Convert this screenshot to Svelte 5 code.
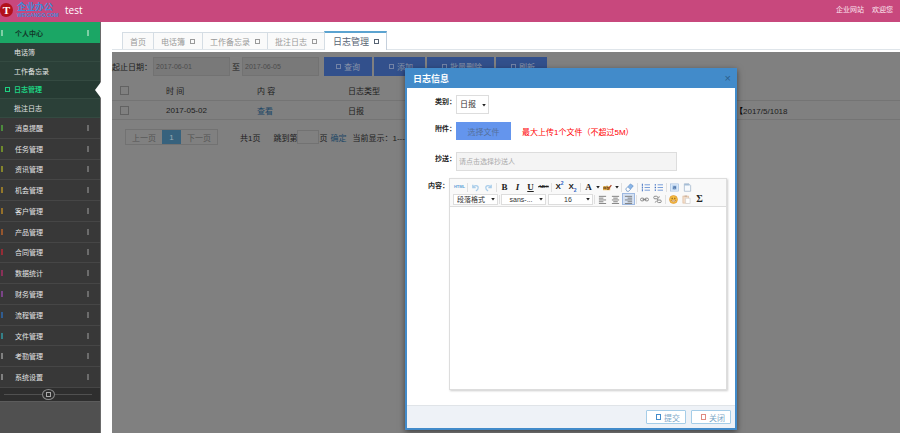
<script>
  const subMenu = ['电话簿', '工作备忘录', '日志管理', '批注日志'];

  const menu = [
    { label: '消息提醒', color: '#4c8a3c' },
    { label: '任务管理', color: '#6f8a2c' },
    { label: '资讯管理', color: '#85852c' },
    { label: '机会管理', color: '#94782a' },
    { label: '客户管理', color: '#96702a' },
    { label: '产品管理', color: '#96562e' },
    { label: '合同管理', color: '#962c36' },
    { label: '数据统计', color: '#8a3058' },
    { label: '财务管理', color: '#7a4488' },
    { label: '流程管理', color: '#305c90' },
    { label: '文件管理', color: '#348088' },
    { label: '考勤管理', color: '#808080' },
    { label: '系统设置', color: '#808080' }
  ];

  const tabs = ['首页', '电话簿', '工作备忘录', '批注日志', '日志管理'];

  let activeSub = $state('日志管理');
  let activeTab = $state('日志管理');
  let align = $state('right');
  let dateFrom = $state('2017-06-01');
  let dateTo = $state('2017-06-05');
</script>

{#snippet caret()}
  <svg class="caret" viewBox="0 0 6 6" aria-hidden="true"><path d="M1.2 2h3.6L3 4.4z" fill="#222" /></svg>
{/snippet}

{#snippet alignIcon(kind)}
  <svg viewBox="0 0 10 10" stroke="#777" stroke-width="1">
    {#if kind === 'left'}
      <path d="M1 1.5h8M1 3.5h5M1 5.5h8M1 7.5h5M1 9.5h8" />
    {:else if kind === 'center'}
      <path d="M1 1.5h8M2.5 3.5h5M1 5.5h8M2.5 7.5h5M1 9.5h8" />
    {:else}
      <path d="M1 1.5h8M4 3.5h5M1 5.5h8M4 7.5h5M1 9.5h8" />
    {/if}
  </svg>
{/snippet}

<div class="page">
  <header class="topbar">
    <div class="logo">
      <span class="logo-mark">T</span>
      <span class="logo-text">
        <strong>企业办公</strong>
        <small>WEIGANGO.COM</small>
      </span>
    </div>
    <span class="user">test</span>
    <nav class="top-links">
      <a href="#site">企业网站</a>
      <a href="#me">欢迎您</a>
    </nav>
  </header>

  <div class="body">
    <aside class="sidebar">
      <button class="group"><i class="bar"></i><span>个人中心</span><i class="bar"></i></button>
      <ul class="sub">
        {#each subMenu as item}
          <li class:active={activeSub === item}>
            <button onclick={() => (activeSub = item)}>
              <span class="mark">{#if activeSub === item}<i class="box"></i>{/if}</span>{item}
            </button>
          </li>
        {/each}
      </ul>
      <ul class="menu">
        {#each menu as item}
          <li>
            <button>
              <i class="bar" style="background: {item.color}"></i><span>{item.label}</span><i class="bar"></i>
            </button>
          </li>
        {/each}
      </ul>
      <div class="collapse">
        <button aria-label="收起"><i class="box"></i></button>
      </div>
    </aside>

    <main>
      <nav class="tabs">
        {#each tabs as tab, i}
          <button class:active={activeTab === tab} onclick={() => (activeTab = tab)}>
            {tab}{#if i > 0}<i class="box"></i>{/if}
          </button>
        {/each}
      </nav>

      <section class="panel">
        <div class="search">
          <label for="from">起止日期：</label>
          <input id="from" type="text" bind:value={dateFrom} />
          <label class="to" for="to">至</label>
          <input id="to" type="text" bind:value={dateTo} />
          <div class="actions">
            <button><i class="box"></i>查询</button>
            <button><i class="box"></i>添加</button>
            <button><i class="box"></i>批量删除</button>
            <button><i class="box"></i>刷新</button>
          </div>
        </div>

        <table>
          <colgroup>
            <col class="c-check" />
            <col class="c-time" />
            <col class="c-content" />
            <col />
            <col class="c-last" />
          </colgroup>
          <thead>
            <tr>
              <th><input type="checkbox" aria-label="全选" /></th>
              <th>时 间</th>
              <th>内 容</th>
              <th>日志类型</th>
              <th></th>
            </tr>
          </thead>
          <tbody>
            <tr>
              <td><input type="checkbox" aria-label="选择" /></td>
              <td>2017-05-02</td>
              <td><a href="#view">查看</a></td>
              <td>日报</td>
              <td><b>【</b>2017/5/1018</td>
            </tr>
          </tbody>
        </table>

        <div class="pager">
          <div class="pages">
            <button>上一页</button>
            <button class="current">1</button>
            <button>下一页</button>
          </div>
          <span class="total">共1页</span>
          <label for="goto">跳到第</label>
          <input id="goto" type="text" />
          <span>页</span>
          <a href="#go">确定</a>
          <span class="showing">当前显示：1---1条</span>
        </div>
      </section>
    </main>
  </div>

  <div class="modal" role="dialog" aria-labelledby="modal-title">
    <header>
      <h2 id="modal-title">日志信息</h2>
      <button aria-label="关闭窗口">×</button>
    </header>

    <form onsubmit={(e) => e.preventDefault()}>
      <div class="row">
        <label for="type">类别：</label>
        <div class="field">
          <span class="select type">
            <select id="type"><option>日报</option><option>周报</option></select>
            {@render caret()}
          </span>
        </div>
      </div>
      <div class="row tall">
        <label for="file">附件：</label>
        <div class="field">
          <button id="file" type="button" class="file">选择文件</button>
          <span class="tip">最大上传1个文件（不超过5M）</span>
        </div>
      </div>
      <div class="row">
        <label for="cc">抄送：</label>
        <div class="field">
          <input id="cc" class="cc" type="text" placeholder="请点击选择抄送人" />
        </div>
      </div>
      <div class="row">
        <label for="content">内容：</label>
        <div class="editor">
          <div class="toolbar">
            <div class="tools">
              <button type="button" class="html">HTML</button>
              <i class="sep"></i>
              <button type="button" aria-label="撤销">
                <svg viewBox="0 0 10 10" fill="none" stroke="#a9cdea" stroke-width="1.4"><path d="M2 2v3.2h3.2M2.2 5C3.5 2.2 8 2 8 5.3 8 7.2 6.8 8.3 5.4 8.8" /></svg>
              </button>
              <button type="button" aria-label="重做">
                <svg viewBox="0 0 10 10" fill="none" stroke="#a9cdea" stroke-width="1.4"><path d="M8 2v3.2H4.8M7.8 5C6.5 2.2 2 2 2 5.3 2 7.2 3.2 8.3 4.6 8.8" /></svg>
              </button>
              <i class="sep"></i>
              <button type="button" class="letter">B</button>
              <button type="button" class="letter italic">I</button>
              <button type="button" class="letter underline">U</button>
              <button type="button" class="strike">ABC</button>
              <i class="sep"></i>
              <button type="button" class="script">X<sup>2</sup></button>
              <button type="button" class="script">X<sub>2</sub></button>
              <i class="sep"></i>
              <button type="button" class="letter">A</button>
              {@render caret()}
              <button type="button" aria-label="背景色">
                <svg viewBox="0 0 10 10"><path d="M0 3.6h8v4.4H0z" fill="#f2b84b" /><path d="M1 7V4.5h2V7M1 5.8h2M4.5 3v4h2V5h-2" fill="none" stroke="#6b4a1c" stroke-width="0.9" /><path d="M6 6.5L9.3 2.4" stroke="#a84a30" stroke-width="1.4" /></svg>
              </button>
              {@render caret()}
              <i class="sep"></i>
              <button type="button" aria-label="清除格式">
                <svg viewBox="0 0 10 10"><path d="M1 6.6L6 1l3.2 2.2L4.4 9H2z" fill="#8ab6e8" stroke="#4e7fbd" stroke-width="0.6" /><path d="M1 6.6L2.9 4.5 6 6.9 4.4 9H2z" fill="#fff" stroke="#7c9cc4" stroke-width="0.6" /></svg>
              </button>
              <i class="sep"></i>
              <button type="button" aria-label="有序列表">
                <svg viewBox="0 0 10 10"><path d="M4 2h6M4 5h6M4 8h6" stroke="#6c95d6" /><path d="M1.5 0.8v2.4M1.5 3.9v2.3M1.5 6.9v2.4" stroke="#3f6fc0" stroke-width="1.1" /></svg>
              </button>
              <button type="button" aria-label="无序列表">
                <svg viewBox="0 0 10 10"><path d="M4 2h6M4 5h6M4 8h6" stroke="#6c95d6" /><path d="M0.8 1.3h1.4v1.4H0.8zM0.8 4.3h1.4v1.4H0.8zM0.8 7.3h1.4v1.4H0.8z" fill="#3f6fc0" /></svg>
              </button>
              <i class="sep"></i>
              <button type="button" aria-label="全选">
                <svg viewBox="0 0 10 10"><rect x="0.5" y="1" width="9" height="8" fill="#e3eefa" stroke="#9dbbdf" stroke-width="0.7" /><rect x="2" y="2.5" width="6" height="5" fill="#bcd6f2" /><path d="M3.6 3.8h2.6v2.6M6.2 5H3.7v1.5h2.5" fill="none" stroke="#3a6299" stroke-width="0.8" /></svg>
              </button>
              <button type="button" aria-label="清空文档">
                <svg viewBox="0 0 10 10"><path d="M1.5 0.8h5l2 2v6.4h-7z" fill="#f7fafd" stroke="#9fb3c8" stroke-width="0.8" /><path d="M1.5 1h4.8l1.5 1.8H1.5z" fill="#a5bdd6" /></svg>
              </button>
            </div>
            <div class="tools">
              <span class="select">
                <select aria-label="段落格式"><option>段落格式</option></select>
                {@render caret()}
              </span>
              <i class="sep"></i>
              <span class="select center">
                <select aria-label="字体"><option>sans-...</option></select>
                {@render caret()}
              </span>
              <i class="gap"></i>
              <span class="select center">
                <select aria-label="字号"><option>16</option></select>
                {@render caret()}
              </span>
              <i class="sep"></i>
              {#each ['left', 'center', 'right'] as kind}
                <button type="button" aria-label={kind} class:on={align === kind} onclick={() => (align = kind)}>
                  {@render alignIcon(kind)}
                </button>
              {/each}
              <i class="sep"></i>
              <button type="button" aria-label="超链接">
                <svg viewBox="0 0 10 10" fill="none" stroke="#858585" stroke-width="1.1"><rect x="0.6" y="3.5" width="4" height="3" rx="1.4" /><rect x="5.4" y="3.5" width="4" height="3" rx="1.4" /><path d="M3 5h4" /></svg>
              </button>
              <button type="button" aria-label="取消链接">
                <svg viewBox="0 0 10 10" fill="none" stroke="#8a8a8a" stroke-width="1.1"><rect x="0.8" y="1.4" width="4.4" height="2.8" rx="1.3" /><rect x="4.8" y="5.6" width="4.4" height="2.8" rx="1.3" /><path d="M7 1.5L6 3.8M2.5 8.4l1.4-2M4.4 4.2l1.4 1.6" /></svg>
              </button>
              <i class="sep"></i>
              <button type="button" aria-label="表情">
                <svg viewBox="0 0 10 10"><circle cx="5" cy="5" r="4.4" fill="#f9c243" stroke="#d88a24" stroke-width="0.7" /><path d="M3.5 3v1.6M6.5 3v1.6" stroke="#6b3d0c" stroke-width="1" /><path d="M2.4 5.8c1 2.3 4.2 2.3 5.2 0z" fill="#fff" stroke="#a3591a" stroke-width="0.6" /></svg>
              </button>
              <button type="button" aria-label="粘贴">
                <svg viewBox="0 0 10 10"><rect x="1" y="1.2" width="6.4" height="7.8" fill="#f2dcc8" stroke="#dcb99a" stroke-width="0.7" /><path d="M2.8 0.6h2.8v1.5H2.8z" fill="#c9b3a0" /><path d="M4 3.6h5v5.8H4z" fill="#fff" stroke="#ccc" stroke-width="0.7" /></svg>
              </button>
              <button type="button" class="sigma">Σ</button>
            </div>
          </div>
          <textarea id="content"></textarea>
        </div>
      </div>
    </form>

    <footer>
      <button class="submit"><i class="box"></i>提交</button>
      <button class="cancel"><i class="box"></i>关闭</button>
    </footer>
  </div>
</div>

<style>
  :global(body) {
    background: #fff;
    font-family: "Liberation Sans", "Noto Sans CJK SC", sans-serif;
    font-size: 8px;
    color: #333;
  }

  button, input, select, textarea {
    margin: 0;
    padding: 0;
    border: 0;
    box-sizing: border-box;
    font: inherit;
    color: inherit;
    background: none;
  }

  button { cursor: pointer; }
  a { text-decoration: none; }
  ul { list-style: none; margin: 0; padding: 0; }

  .box {
    display: inline-block;
    box-sizing: border-box;
    width: 5px;
    height: 5px;
    border: 1px solid currentColor;
  }

  .page {
    position: relative;
    display: flex;
    flex-direction: column;
    min-height: 100vh;
  }

  /* Top bar */
  .topbar {
    display: flex;
    align-items: center;
    height: 22px;
    box-sizing: border-box;
    padding: 0 7px 2px 0;
    background: #c8487d;
    color: #fff;
  }

  .logo {
    display: flex;
    align-items: center;
    gap: 4px;
    width: 65px;
  }

  .logo-mark {
    width: 13px;
    height: 14px;
    border-radius: 6px 7px 7px 6px;
    background: #b3101c;
    font: bold 11px/14px "Liberation Serif", serif;
    text-align: center;
  }

  .logo-text {
    display: flex;
    flex-direction: column;
    color: #3f8bd8;
  }

  .logo-text strong { font-size: 9px; line-height: 10px; }
  .logo-text small { font-size: 5px; line-height: 6px; font-weight: bold; }
  .user { font: 10px/20px "Open Sans", sans-serif; }

  .top-links {
    display: flex;
    gap: 8px;
    margin-left: auto;
    font-size: 7px;
    line-height: 18px;
  }

  .top-links a { color: #fbe6ef; }

  .body {
    flex: 1;
    display: flex;
  }

  /* Sidebar */
  .sidebar {
    width: 101px;
    flex: none;
    box-sizing: border-box;
    border-right: 1px solid #6a6a6a;
    background: #505050;
    font-size: 7px;
    color: #e4e4e4;
  }

  .sidebar button { text-align: left; }

  .group, .menu button {
    display: flex;
    align-items: center;
    width: 100%;
    padding: 0 11px 0 1px;
  }

  .group {
    height: 21px;
    background: #1ba665;
    color: #12382a;
    font-weight: bold;
  }

  .group span, .menu span {
    flex: 1;
    padding-left: 12px;
  }

  .bar {
    width: 2px;
    height: 6px;
    background: #6c6c6c;
  }

  .group .bar { background: #7fcfa6; }

  .sub {
    display: grid;
    grid-auto-rows: 1fr;
    height: 75px;
    background: #2b4038;
  }

  .sub li {
    position: relative;
    display: flex;
    border-bottom: 1px solid #344a41;
  }

  .sub button {
    display: flex;
    align-items: center;
    width: 100%;
  }

  .sub .mark {
    display: flex;
    width: 14px;
    box-sizing: border-box;
    padding-left: 5px;
  }

  .sub .active {
    background: #263b33;
    color: #1ed282;
    font-weight: bold;
  }

  .sub .active::after {
    content: "";
    position: absolute;
    right: -1px;
    top: 1px;
    border: 8px solid transparent;
    border-left: 0;
    border-right: 6px solid #fff;
  }

  .menu {
    display: grid;
    grid-auto-rows: 1fr;
    height: 270px;
    background: #383838;
  }

  .menu li {
    display: flex;
    border-bottom: 1px solid #464646;
  }

  .collapse {
    display: flex;
    align-items: center;
    height: 13px;
    padding: 0 8px 0 4px;
    background: #2e2e2e;
    border-bottom: 1px solid #5c5c5c;
  }

  .collapse::before, .collapse::after {
    content: "";
    flex: 1;
    height: 1px;
    background: #505050;
  }

  .collapse button {
    display: grid;
    place-items: center;
    width: 13px;
    height: 11px;
    border: 1px solid #8a8a8a;
    border-radius: 50%;
    color: #aaa;
  }

  /* Content */
  main {
    flex: 1;
    min-width: 0;
    display: flex;
    flex-direction: column;
    padding-left: 11px;
  }

  .tabs {
    display: flex;
    align-items: flex-end;
    height: 28px;
    padding-left: 10px;
    margin-bottom: 2px;
    box-sizing: border-box;
    border-bottom: 1px solid #dfe5ea;
  }

  .tabs button {
    display: flex;
    align-items: center;
    gap: 5px;
    height: 17px;
    padding: 0 7px;
    border: 1px solid #d5dde4;
    border-right: 0;
    border-bottom: 0;
    background: #fafafa;
    color: #999;
  }

  .tabs .active {
    height: 19px;
    padding: 0 7px 0 8px;
    margin-bottom: -1px;
    border-top: 2px solid #5ba3d0;
    border-right: 1px solid #c5d0dc;
    background: #fff;
    color: #576373;
    font-size: 9px;
  }

  .panel {
    flex: 1;
    background: #808080;
    color: #1c1c1c;
  }

  .search {
    display: flex;
    align-items: center;
    height: 28px;
    box-sizing: border-box;
    padding-top: 1px;
  }

  .search label { width: 41px; white-space: nowrap; }
  .search .to { width: 12px; text-align: center; }

  .search input {
    width: 77px;
    height: 19px;
    padding-left: 2px;
    border: 1px solid #727272;
    background: #797979;
    color: #4c4c4c;
    font-size: 7px;
  }

  .actions {
    display: flex;
    gap: 2px;
    margin-left: 5px;
  }

  .actions button {
    display: flex;
    align-items: center;
    gap: 3px;
    height: 19px;
    padding: 0 12px 0 15px;
    background: #32508c;
    color: #8a95a8;
    white-space: nowrap;
  }

  .actions button:first-child { padding-left: 12px; }
  .actions .box { border-color: #7383a6; }

  table {
    width: 100%;
    table-layout: fixed;
    border-collapse: collapse;
  }

  .c-check { width: 46px; }
  .c-time, .c-content { width: 91px; }
  .c-last { width: 173px; }

  th, td {
    height: 18px;
    padding: 0 8px;
    border-bottom: 1px solid #747474;
    text-align: left;
    font-weight: normal;
    white-space: nowrap;
  }

  th { height: 20px; }
  td b { color: #000; }
  .panel a { color: #1d4766; }

  input[type="checkbox"] {
    appearance: none;
    display: block;
    width: 9px;
    height: 9px;
    border: 1px solid #626262;
  }

  .pager {
    display: flex;
    align-items: center;
    padding: 9px 0 0 13px;
    white-space: nowrap;
  }

  .pages {
    display: flex;
    height: 16px;
    box-sizing: border-box;
    border: 1px solid #727272;
    color: #555;
  }

  .pages button { width: 36px; }

  .pages .current {
    width: 19px;
    background: #37627d;
    color: #9aaab5;
  }

  .total { margin: 0 13px 0 22px; }

  .pager input {
    width: 22px;
    height: 14px;
    border: 1px solid #727272;
  }

  .pager a { margin: 0 6px 0 3px; }

  /* Dialog */
  .modal {
    position: absolute;
    top: 68px;
    left: 45%;
    width: 332px;
    box-sizing: border-box;
    border: 2px solid #428bca;
    border-top: 0;
    background: #fff;
    box-shadow: 0 2px 6px rgba(0, 0, 0, 0.5);
  }

  .modal header {
    display: flex;
    align-items: center;
    justify-content: space-between;
    height: 20px;
    padding: 0 4px 0 6px;
    background: #428bca;
  }

  h2 {
    margin: 0;
    font-size: 9px;
    color: #fff;
  }

  .modal header button {
    font-size: 11px;
    color: #2c5f8c;
  }

  form { padding: 7px 0 15px; }

  .row {
    display: flex;
    min-height: 27px;
  }

  .row.tall { min-height: 30px; }

  .row > label {
    width: 42px;
    flex: none;
    box-sizing: border-box;
    padding-top: 1px;
    font-size: 7px;
    line-height: 12px;
    font-weight: bold;
    text-align: right;
    white-space: nowrap;
    color: #222;
  }

  .row:not(:last-child) > label { width: 49px; }

  .field {
    display: flex;
    align-items: center;
    align-self: flex-start;
  }

  .select {
    display: grid;
    align-items: center;
    width: 45px;
    height: 11px;
    box-sizing: border-box;
    border: 1px solid #ddd;
    background: #fff;
  }

  .select > :global(*) { grid-area: 1 / 1; }

  .select select {
    appearance: none;
    width: 100%;
    padding: 0 8px 0 3px;
    font-size: 7px;
    line-height: 9px;
  }

  .select.center select { text-align: center; }

  .select .caret {
    justify-self: end;
    margin-right: 1px;
    pointer-events: none;
  }

  .select.type {
    width: 33px;
    height: 19px;
  }

  .select.type select { font-size: 8px; line-height: 14px; }

  .file {
    width: 55px;
    height: 18px;
    background: #6495ed;
    color: #55709c;
  }

  .tip {
    margin-left: 11px;
    color: #f00;
    white-space: nowrap;
  }

  .cc {
    width: 221px;
    height: 19px;
    padding-left: 2px;
    border: 1px solid #ddd;
    background: #f4f4f4;
    font-size: 7px;
  }

  .cc::placeholder { color: #aaa; }

  .editor {
    width: 278px;
    box-sizing: border-box;
    margin-top: -1px;
    border: 1px solid #ddd;
    box-shadow: 1px 1px 2px #ccc;
  }

  .toolbar {
    display: flex;
    flex-direction: column;
    height: 28px;
    box-sizing: border-box;
    padding: 2px 3px;
    border-bottom: 1px solid #ddd;
    background: #f9f9f9;
  }

  .tools {
    display: flex;
    align-items: center;
    height: 12px;
  }

  .tools button {
    display: grid;
    place-items: center;
    width: 13px;
    height: 12px;
    line-height: 12px;
    color: #222;
  }

  .tools button svg { width: 9px; height: 9px; }
  .caret { width: 6px; height: 6px; }

  .sep {
    width: 1px;
    height: 9px;
    margin: 0 1px;
    background: #e0e0e0;
  }

  .gap { width: 2px; }
  .tools .letter { font: bold 9px/12px "Liberation Serif", serif; }
  .tools .italic { font-style: italic; }
  .tools .underline { text-decoration: underline; }

  .tools .html {
    font-size: 4px;
    font-weight: bold;
    color: #5fa0d8;
  }

  .tools .strike {
    font: bold 5px/12px "Liberation Serif", serif;
    text-decoration: line-through;
  }

  .tools .script {
    display: block;
    font-size: 8px;
    font-weight: bold;
    text-align: center;
    white-space: nowrap;
  }

  .script sup, .script sub {
    font-size: 5px;
    line-height: 0;
    color: #2d62c4;
  }

  .tools .on {
    border: 1px solid #9db8e0;
    background: #d5e1f2;
  }

  .tools .sigma { font: bold 10px/12px "Liberation Serif", serif; }

  textarea {
    display: block;
    width: 100%;
    height: 182px;
    padding: 4px;
    resize: none;
    outline: 0;
  }

  .modal footer {
    display: flex;
    align-items: center;
    justify-content: flex-end;
    gap: 5px;
    height: 22px;
    padding-right: 4px;
    border-top: 1px solid #e0e4e8;
    background: #eef2f7;
  }

  .modal footer button {
    display: flex;
    align-items: center;
    justify-content: flex-end;
    gap: 3px;
    width: 40px;
    height: 14px;
    padding-right: 5px;
    border: 1px solid #a5cde8;
    border-radius: 1px;
    background: #fff;
    color: #7ba7c7;
  }

  .modal footer .box { height: 6px; }
  .submit .box { color: #428bca; }
  .cancel .box { color: #e08a80; }
</style>
